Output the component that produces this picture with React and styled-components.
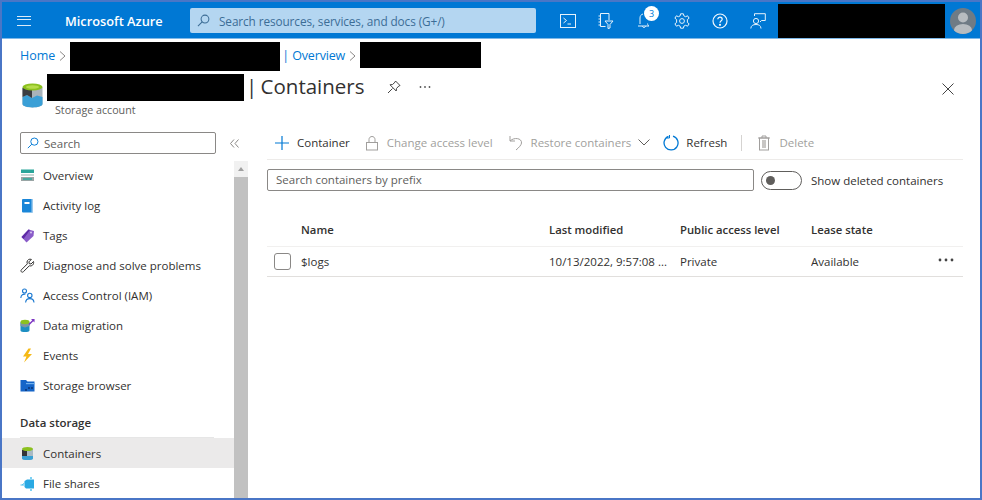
import React from 'react';
import styled, { createGlobalStyle } from 'styled-components';

const GlobalStyle = createGlobalStyle`
    html, body { margin: 0; padding: 0; background: #fff; }
    body { font-family: "Open Sans", "Noto Sans", "Liberation Sans", sans-serif; }
`;

const Frame = styled.div`
    width: 982px;
    height: 500px;
    box-sizing: border-box;
    border: 2px solid #4a76c6;
    overflow: hidden;
    display: flex;
    flex-direction: column;
    background: #fff;
`;

const TopBar = styled.header`
    height: 37px;
    flex: none;
    box-sizing: border-box;
    padding-top: 1px;
    background: #0078d4;
    display: flex;
    align-items: center;
    color: #fff;
    border-bottom: 1px solid #7fb8e8;
`;

const Burger = styled.div`
    width: 14px;
    height: 10px;
    margin-left: 15px;
    border-top: 1.5px solid #dcebf8;
    border-bottom: 1.5px solid #dcebf8;
    position: relative;
    box-sizing: border-box;
    &::after {
        content: '';
        position: absolute;
        left: 0;
        right: 0;
        top: 2.5px;
        border-top: 1.5px solid #dcebf8;
    }
`;

const Brand = styled.div`
    margin-left: 34px;
    width: 125px;
    font-size: 12.8px;
    font-weight: 600;
    white-space: nowrap;
`;

const GlobalSearch = styled.div`
    width: 346px;
    height: 25px;
    box-sizing: border-box;
    background: #b4d6f1;
    border-radius: 2px;
    display: flex;
    align-items: center;
    gap: 9px;
    padding-left: 7px;
    color: #3c6d96;
    font-size: 11.8px;
    letter-spacing: -0.1px;
`;

const TopIcons = styled.div`
    display: flex;
    align-items: center;
    margin-left: 22px;
    gap: 18px;
`;

const TopIconSlot = styled.div`
    width: 20px;
    height: 20px;
    position: relative;
    display: flex;
    align-items: center;
    justify-content: center;
`;

const Badge = styled.span`
    position: absolute;
    top: -5px;
    left: 10px;
    width: 15px;
    height: 15px;
    border-radius: 50%;
    background: #fff;
    color: #0078d4;
    font-size: 9px;
    line-height: 15px;
    text-align: center;
`;

const Redacted = styled.div`
    background: #000;
    flex: none;
    width: ${({ $w }) => $w}px;
    height: ${({ $h }) => $h}px;
`;

const AccountBlock = styled(Redacted)`
    margin-left: 10px;
`;

const Avatar = styled.div`
    margin-left: 5px;
    width: 26px;
    height: 26px;
    border-radius: 50%;
    overflow: hidden;
    flex: none;
`;

const Breadcrumb = styled.nav`
    height: 33px;
    flex: none;
    padding: 3px 0 0 18px;
    box-sizing: border-box;
    display: flex;
    align-items: flex-start;
    color: #0078d4;
    font-size: 12.5px;
`;

const Crumb = styled.span`
    line-height: 28px;
    white-space: nowrap;
    margin-left: ${({ $before }) => $before || 0}px;
    letter-spacing: ${({ $tight }) => ($tight ? '-0.15px' : '0')};
`;

const CrumbSep = styled.svg`
    width: 7px;
    height: 10px;
    margin: 9px 4px 0 4px;
    flex: none;
`;

const TitleRow = styled.div`
    height: 57px;
    flex: none;
    box-sizing: border-box;
    display: flex;
    align-items: flex-start;
    padding: 2px 26px 0 18px;
`;

const TitleIcon = styled.div`
    width: 25px;
    flex: none;
    padding: 9px 0 0 2px;
`;

const TitleText = styled.div`
    display: flex;
    flex-direction: column;
`;

const TitleLine = styled.div`
    display: flex;
    align-items: center;
    height: 27px;
`;

const Title = styled.h1`
    margin: 0 0 4px 2px;
    font-size: 20.5px;
    font-weight: 400;
    word-spacing: -2px;
    color: #323130;
    white-space: nowrap;
`;

const Subtitle = styled.div`
    font-size: 10.7px;
    color: #605e5c;
    margin: 2px 0 0 8px;
`;

const Pin = styled.svg`
    width: 14px;
    height: 14px;
    margin: 0 0 2px 22px;
`;

const More = styled.svg`
    width: 12px;
    height: 4px;
    margin: 0 0 2px 18px;
`;

const CloseBtn = styled.svg`
    width: 12px;
    height: 12px;
    margin: 9px 0 0 auto;
`;

const Main = styled.div`
    flex: 1;
    min-height: 0;
    display: flex;
`;

const Sidebar = styled.aside`
    width: 246px;
    flex: none;
    display: flex;
    flex-direction: column;
`;

const SideSearchRow = styled.div`
    display: flex;
    align-items: flex-start;
    height: 31px;
    flex: none;
    padding: 3px 0 0 18px;
    box-sizing: border-box;
`;

const SideSearch = styled.div`
    width: 196px;
    height: 22px;
    box-sizing: border-box;
    border: 1px solid #8a8886;
    border-radius: 2px;
    display: flex;
    align-items: center;
    gap: 5px;
    padding-left: 6px;
    font-size: 11.5px;
    color: #605e5c;
`;

const Collapse = styled.svg`
    width: 9px;
    height: 9px;
    margin: 7px 0 0 14px;
`;

const SideBody = styled.div`
    flex: 1;
    min-height: 0;
    display: flex;
    overflow: hidden;
`;

const Menu = styled.div`
    width: 232px;
    flex: none;
`;

const MenuItem = styled.div`
    height: 30px;
    display: flex;
    align-items: center;
    gap: 8px;
    padding-left: 18px;
    font-size: 11.5px;
    color: #323130;
    background: ${({ $active }) => ($active ? '#ebeaea' : 'transparent')};
    white-space: nowrap;
`;

const MenuIcon = styled.svg`
    width: 15px;
    height: 15px;
    flex: none;
`;

const MenuHeading = styled.div`
    height: 32px;
    margin: 6px 20px 0 18px;
    box-sizing: border-box;
    padding-top: 9px;
    font-size: 11.5px;
    font-weight: 600;
    color: #323130;
    border-bottom: 1px solid #e6e6e6;
`;

const ScrollTrack = styled.div`
    width: 14px;
    flex: none;
    margin-top: 1px;
    display: flex;
    flex-direction: column;
    background: #f1f1f1;
`;

const ScrollArrow = styled.div`
    height: 16px;
    flex: none;
    display: flex;
    align-items: center;
    justify-content: center;
    &::before {
        content: '';
        border-left: 3.5px solid transparent;
        border-right: 3.5px solid transparent;
        border-bottom: 4px solid #a0a0a0;
    }
`;

const ScrollThumb = styled.div`
    flex: 1;
    background: #c1c1c1;
`;

const Content = styled.main`
    flex: 1;
    min-width: 0;
    padding: 0 17px 0 19px;
`;

const Toolbar = styled.div`
    height: 31px;
    display: flex;
    align-items: center;
    border-bottom: 1px solid #edebe9;
    box-sizing: border-box;
    padding: 0 0 3px 7px;
    font-size: 11.5px;
`;

const ToolButton = styled.div`
    display: flex;
    align-items: center;
    gap: 7px;
    margin-right: ${({ $gap }) => $gap}px;
    color: ${({ $off }) => ($off ? '#a19f9d' : '#323130')};
    white-space: nowrap;
`;

const ToolDivider = styled.div`
    width: 1px;
    height: 16px;
    background: #d5d3d1;
    margin-right: 14px;
`;

const ToolIcon = styled.svg`
    width: 16px;
    height: 16px;
    flex: none;
`;

const FilterRow = styled.div`
    display: flex;
    align-items: center;
    margin-top: 9px;
    height: 22px;
`;

const PrefixInput = styled.div`
    width: 487px;
    height: 22px;
    box-sizing: border-box;
    border: 1px solid #8a8886;
    border-radius: 2px;
    padding-left: 8px;
    font-size: 11.5px;
    line-height: 20px;
    color: #605e5c;
`;

const Toggle = styled.div`
    width: 41px;
    height: 19px;
    box-sizing: border-box;
    margin-left: 7px;
    border: 1px solid #605e5c;
    border-radius: 10px;
    display: flex;
    align-items: center;
    padding-left: 4px;
    &::before {
        content: '';
        width: 9px;
        height: 9px;
        border-radius: 50%;
        background: #605e5c;
    }
`;

const ToggleLabel = styled.span`
    margin-left: 9px;
    font-size: 11.5px;
    color: #323130;
    white-space: nowrap;
`;

const TableGrid = styled.div`
    margin-top: 22px;
`;

const Row = styled.div`
    display: grid;
    grid-template-columns: 34px 248px 131px 131px 1fr 24px;
    align-items: center;
    height: ${({ $h }) => $h}px;
    border-bottom: 1px solid ${({ $head }) => ($head ? '#f1f0ef' : '#e1dfdd')};
    box-sizing: border-box;
    font-size: ${({ $head }) => ($head ? 11.3 : 11.5)}px;
    font-weight: ${({ $head }) => ($head ? 600 : 400)};
    color: #323130;
    white-space: nowrap;
`;

const Cell = styled.div`
    overflow: hidden;
`;

const Checkbox = styled.div`
    width: 17px;
    height: 17px;
    margin-left: 7px;
    box-sizing: border-box;
    border: 1px solid #8a8886;
    border-radius: 3px;
`;

const RowMenu = styled.svg`
    width: 16px;
    height: 4px;
    margin: 0 0 4px -1px;
`;

const icons = {
    overview: (
        <MenuIcon viewBox="0 0 15 15">
            <rect x="1" y="1.5" width="13" height="3.5" fill="#2aa59a" />
            <rect x="1" y="6" width="13" height="2" fill="#c8d8d6" />
            <rect x="1" y="9" width="13" height="4" fill="#9aa5a5" />
            <rect x="3" y="10" width="9" height="2" fill="#48a89f" />
        </MenuIcon>
    ),
    activity: (
        <MenuIcon viewBox="0 0 15 15">
            <rect x="2" y="1" width="11" height="13.5" rx="1" fill="#1a86d8" />
            <rect x="11.5" y="1" width="1.5" height="13.5" fill="#9cc9ec" />
            <rect x="4.5" y="4" width="5" height="2" fill="#fff" />
        </MenuIcon>
    ),
    tags: (
        <MenuIcon viewBox="0 0 15 15">
            <path d="M1.5 9 L8.5 1.5 L14 3 L13.5 8 L6.5 14.5 Z" fill="#8a5cc9" />
            <path d="M1.5 9 L8.5 1.5 L10 2 L3.5 11 Z" fill="#5e2aa5" />
            <circle cx="11" cy="4.5" r="1" fill="#d9c8ef" />
        </MenuIcon>
    ),
    wrench: (
        <MenuIcon viewBox="0 0 15 15">
            <path
                d="M13.5 3.5 L11 6 L9.2 5.6 L8.9 3.9 L11.4 1.4 C9.4 0.6 7.2 1.8 7 4 C7 4.7 7.1 5.3 7.4 5.8 L1.4 11.8 C0.7 12.5 0.9 13.3 1.4 13.8 C1.9 14.3 2.8 14.4 3.4 13.7 L9.3 7.8 C11.6 8.6 14.3 6.6 13.5 3.5 Z"
                fill="none"
                stroke="#323130"
                strokeWidth="1"
            />
        </MenuIcon>
    ),
    iam: (
        <MenuIcon viewBox="0 0 15 15">
            <g fill="none" stroke="#1a78d0" strokeWidth="1.1">
                <circle cx="4.5" cy="3" r="2" />
                <path d="M0.8 10 C1 6.8 3.2 6 5.4 6.2" />
                <circle cx="9.8" cy="7.4" r="2.2" />
                <path d="M5.6 14.5 C5.8 11.4 7.6 10.6 9.8 10.6 C12 10.6 13.8 11.4 14 14.5" />
            </g>
        </MenuIcon>
    ),
    migration: (
        <MenuIcon viewBox="0 0 15 15">
            <path d="M0.5 4 V12.5 C0.5 14.6 9.5 14.6 9.5 12.5 V4 Z" fill="#1d8fc2" />
            <path d="M0.5 5 H9.5 V8 L5 9.5 L0.5 8 Z" fill="#7d95a3" />
            <ellipse cx="5" cy="4" rx="4.5" ry="2.2" fill="#8cc11f" />
            <path d="M9 6.5 L14 1.5" stroke="#7c35c2" strokeWidth="1.4" />
            <path d="M11 1 H14.5 V4.5 Z" fill="#7c35c2" />
        </MenuIcon>
    ),
    events: (
        <MenuIcon viewBox="0 0 15 15">
            <path d="M8.5 0.5 L3 8.5 H6.5 L4 14.5 L12 6 H8 L11 0.5 Z" fill="#f5b915" />
        </MenuIcon>
    ),
    browser: (
        <MenuIcon viewBox="0 0 15 15">
            <path d="M0.5 2 H6 L7.5 3.5 H14.5 V13.5 H0.5 Z" fill="#1565c8" />
            <rect x="6" y="5" width="8.5" height="1.2" fill="#6fb1ee" />
            <g fill="#0e3f86">
                <rect x="8" y="9" width="2" height="2" />
                <rect x="11" y="9" width="2" height="2" />
                <rect x="5" y="11" width="2" height="2" />
            </g>
        </MenuIcon>
    ),
    containers: (
        <MenuIcon viewBox="0 0 15 15">
            <path d="M2 3 V12.5 C2 14.5 13 14.5 13 12.5 V3 Z" fill="#a9bac4" />
            <path d="M2 10 H13 V12.5 C13 14.5 2 14.5 2 12.5 Z" fill="#3aa0d4" />
            <path d="M2 4 H7 V10 H2 Z" fill="#333438" />
            <ellipse cx="7.5" cy="3" rx="5.5" ry="2" fill="#8cc11f" />
        </MenuIcon>
    ),
    shares: (
        <MenuIcon viewBox="0 0 15 15">
            <path d="M4.5 5 L7 3.5 H14 V12.5 H6 L4.5 11 Z" fill="#29a9e3" />
            <path d="M0.5 9 H4 M2 9 L4.5 7" stroke="#50c2ef" strokeWidth="1" />
            <circle cx="11" cy="2" r="1" fill="#50c2ef" />
            <circle cx="11" cy="14" r="1" fill="#50c2ef" />
        </MenuIcon>
    ),
};

const menuTop = [
    ['overview', 'Overview'],
    ['activity', 'Activity log'],
    ['tags', 'Tags'],
    ['wrench', 'Diagnose and solve problems'],
    ['iam', 'Access Control (IAM)'],
    ['migration', 'Data migration'],
    ['events', 'Events'],
    ['browser', 'Storage browser'],
];

const SearchGlyph = ({ color, size }) => (
    <svg width={size} height={size} viewBox="0 0 14 14" fill="none" stroke={color} strokeWidth="1.1">
        <circle cx="8.6" cy="5.4" r="4.2" />
        <path d="M5.6 8.4 L1 13" />
    </svg>
);

const App = () => (
    <Frame>
        <GlobalStyle />
        <TopBar>
            <Burger />
            <Brand>Microsoft Azure</Brand>
            <GlobalSearch>
                <SearchGlyph color="#3c6d96" size={13} />
                Search resources, services, and docs (G+/)
            </GlobalSearch>
            <TopIcons>
                <TopIconSlot>
                    <svg width="16" height="14" viewBox="0 0 16 14" fill="none" stroke="#e6f2fb" strokeWidth="1">
                        <rect x="0.5" y="0.5" width="15" height="13" />
                        <path d="M3.5 4 L6.5 6.5 L3.5 9" />
                        <path d="M7.5 10 H11" />
                    </svg>
                </TopIconSlot>
                <TopIconSlot>
                    <svg width="16" height="16" viewBox="0 0 16 16" fill="none" stroke="#e6f2fb" strokeWidth="1">
                        <path d="M2.5 0.5 H11 V7 M2.5 0.5 V13.5 H7.5" />
                        <path d="M0.5 3 H2.5 M0.5 6 H2.5 M0.5 9 H2.5 M0.5 12 H2.5" />
                        <path d="M7 8 H15 L12 11.5 V15 L10 15.5 V11.5 Z" />
                    </svg>
                </TopIconSlot>
                <TopIconSlot>
                    <svg width="14" height="16" viewBox="0 0 14 16" fill="none" stroke="#e6f2fb" strokeWidth="1">
                        <path d="M3 11 V5 C3 3 4 1.5 6 1 M1 13 H12 C11 12.5 10.6 11.8 10.6 10.5" />
                        <path d="M5.5 13 C5.5 15 8.5 15 8.5 13" />
                    </svg>
                    <Badge>3</Badge>
                </TopIconSlot>
                <TopIconSlot>
                    <svg width="16" height="16" viewBox="0 0 16 16" fill="none" stroke="#e6f2fb" strokeWidth="1">
                        <circle cx="8" cy="8" r="2.4" />
                        <path d="M6.6 0.8 H9.4 L9.9 2.9 L11.6 3.7 L13.6 2.8 L15.1 5.2 L13.4 6.5 V9.5 L15.1 10.8 L13.6 13.2 L11.6 12.3 L9.9 13.1 L9.4 15.2 H6.6 L6.1 13.1 L4.4 12.3 L2.4 13.2 L0.9 10.8 L2.6 9.5 V6.5 L0.9 5.2 L2.4 2.8 L4.4 3.7 L6.1 2.9 Z" />
                    </svg>
                </TopIconSlot>
                <TopIconSlot>
                    <svg width="16" height="16" viewBox="0 0 16 16" fill="none" stroke="#f2f8fd" strokeWidth="1.2">
                        <circle cx="8" cy="8" r="7" />
                        <path d="M5.8 6.2 C5.8 3.4 10.2 3.4 10.2 6.2 C10.2 7.8 8 7.8 8 9.8" />
                        <circle cx="8" cy="11.8" r="0.5" fill="#f2f8fd" />
                    </svg>
                </TopIconSlot>
                <TopIconSlot>
                    <svg width="16" height="16" viewBox="0 0 16 16" fill="none" stroke="#e6f2fb" strokeWidth="1">
                        <circle cx="6" cy="8" r="2.6" />
                        <path d="M0.8 15.5 C1 12.6 3 11.5 6 11.5 C9 11.5 10.8 12.6 11 15.5" />
                        <path d="M4.5 3 V0.7 H15.3 V7.5 H11.5 L10 9" />
                    </svg>
                </TopIconSlot>
            </TopIcons>
            <AccountBlock $w={167} $h={34} />
            <Avatar>
                <svg width="26" height="26" viewBox="0 0 26 26">
                    <rect width="26" height="26" fill="#6f7b85" />
                    <circle cx="13" cy="9.5" r="5" fill="#b7bcc0" />
                    <ellipse cx="13" cy="22" rx="9" ry="6" fill="#b7bcc0" />
                </svg>
            </Avatar>
        </TopBar>
        <Breadcrumb>
            <Crumb>Home</Crumb>
            <CrumbSep viewBox="0 0 7 10" fill="none" stroke="#8a8886">
                <path d="M1 0.5 L6 5 L1 9.5" />
            </CrumbSep>
            <Redacted $w={210} $h={29} />
            <Crumb $before={2} $tight>| Overview</Crumb>
            <CrumbSep viewBox="0 0 7 10" fill="none" stroke="#8a8886">
                <path d="M1 0.5 L6 5 L1 9.5" />
            </CrumbSep>
            <Redacted $w={121} $h={26} />
        </Breadcrumb>
        <TitleRow>
            <TitleIcon>
                <svg width="21" height="25" viewBox="0 0 21 25">
                    <path d="M0.5 4 V21 C0.5 25.5 20.5 25.5 20.5 21 V4 Z" fill="#a9b3ba" />
                    <path d="M0.5 14 L5 12 L10 15 L15 12.5 L20.5 14 V21 C20.5 25.5 0.5 25.5 0.5 21 Z" fill="#3a9fd6" />
                    <path d="M0.5 5 H10 V15 L5 12 L0.5 14 Z" fill="#3b3d42" />
                    <ellipse cx="10.5" cy="4" rx="10" ry="3.5" fill="#8cc11f" />
                    <ellipse cx="10.5" cy="4" rx="6.5" ry="1.8" fill="#b6dc4a" />
                </svg>
            </TitleIcon>
            <TitleText>
                <TitleLine>
                    <Redacted $w={197} $h={27} />
                    <Title>| Containers</Title>
                    <Pin viewBox="0 0 14 14" fill="none" stroke="#444" strokeWidth="1">
                        <path d="M8.5 1 L13 5.5 L11.8 6 L9.5 8.5 L9.2 11 L3 4.8 L5.5 4.5 L8 2.2 Z" />
                        <path d="M5.5 8.5 L1 13" />
                    </Pin>
                    <More viewBox="0 0 12 4" fill="#555">
                        <circle cx="1.5" cy="2" r="0.9" />
                        <circle cx="6" cy="2" r="0.9" />
                        <circle cx="10.5" cy="2" r="0.9" />
                    </More>
                </TitleLine>
                <Subtitle>Storage account</Subtitle>
            </TitleText>
            <CloseBtn viewBox="0 0 12 12" stroke="#444" strokeWidth="1">
                <path d="M0.5 0.5 L11.5 11.5 M11.5 0.5 L0.5 11.5" />
            </CloseBtn>
        </TitleRow>
        <Main>
            <Sidebar>
                <SideSearchRow>
                    <SideSearch>
                        <SearchGlyph color="#0078d4" size={12} />
                        Search
                    </SideSearch>
                    <Collapse viewBox="0 0 9 9" fill="none" stroke="#8a8886">
                        <path d="M4 0.5 L0.5 4.5 L4 8.5 M8.5 0.5 L5 4.5 L8.5 8.5" />
                    </Collapse>
                </SideSearchRow>
                <SideBody>
                    <Menu>
                        {menuTop.map(([key, label]) => (
                            <MenuItem key={key}>
                                {icons[key]}
                                {label}
                            </MenuItem>
                        ))}
                        <MenuHeading>Data storage</MenuHeading>
                        <MenuItem $active>
                            {icons.containers}
                            Containers
                        </MenuItem>
                        <MenuItem>
                            {icons.shares}
                            File shares
                        </MenuItem>
                    </Menu>
                    <ScrollTrack>
                        <ScrollArrow />
                        <ScrollThumb />
                    </ScrollTrack>
                </SideBody>
            </Sidebar>
            <Content>
                <Toolbar>
                    <ToolButton $gap={14}>
                        <ToolIcon viewBox="0 0 16 16" stroke="#0078d4" strokeWidth="1.2">
                            <path d="M8 1 V15 M1 8 H15" />
                        </ToolIcon>
                        Container
                    </ToolButton>
                    <ToolButton $off $gap={15}>
                        <ToolIcon viewBox="0 0 16 16" fill="none" stroke="#a19f9d">
                            <rect x="2.5" y="7.5" width="11" height="7.5" />
                            <path d="M5 7.5 V4.5 C5 0.5 11 0.5 11 4.5 V7.5" />
                        </ToolIcon>
                        Change access level
                    </ToolButton>
                    <ToolButton $off $gap={13}>
                        <ToolIcon viewBox="0 0 16 16" fill="none" stroke="#a19f9d">
                            <path d="M2 1 L2 6 L7 6" />
                            <path d="M2 6 C6 2 14 3 13.5 8 C13.3 10 11 12.5 8 15" />
                        </ToolIcon>
                        Restore containers
                        <svg width="12" height="7" viewBox="0 0 12 7" fill="none" stroke="#605e5c">
                            <path d="M0.5 0.5 L6 6 L11.5 0.5" />
                        </svg>
                    </ToolButton>
                    <ToolButton $gap={14}>
                        <ToolIcon viewBox="0 0 16 16" fill="none" stroke="#0078d4" strokeWidth="1.3">
                            <path d="M5.5 1.4 A7 7 0 1 0 10 1.2" />
                            <path d="M6.5 0 V3 H3.5" strokeWidth="1" />
                        </ToolIcon>
                        Refresh
                    </ToolButton>
                    <ToolDivider />
                    <ToolButton $off $gap={0}>
                        <ToolIcon viewBox="0 0 16 16" fill="none" stroke="#a19f9d">
                            <path d="M2 3 H14 M6 3 V1 H10 V3" />
                            <rect x="3.5" y="3" width="9" height="12" />
                            <rect x="6" y="5" width="4" height="8" fill="#c8c6c4" stroke="none" />
                        </ToolIcon>
                        Delete
                    </ToolButton>
                </Toolbar>
                <FilterRow>
                    <PrefixInput>Search containers by prefix</PrefixInput>
                    <Toggle />
                    <ToggleLabel>Show deleted containers</ToggleLabel>
                </FilterRow>
                <TableGrid>
                    <Row $head $h={34}>
                        <span />
                        <Cell>Name</Cell>
                        <Cell>Last modified</Cell>
                        <Cell>Public access level</Cell>
                        <Cell>Lease state</Cell>
                        <span />
                    </Row>
                    <Row $h={30}>
                        <Checkbox />
                        <Cell>$logs</Cell>
                        <Cell>10/13/2022, 9:57:08 ...</Cell>
                        <Cell>Private</Cell>
                        <Cell>Available</Cell>
                        <RowMenu viewBox="0 0 16 4" fill="#444">
                            <circle cx="2" cy="2" r="1.4" />
                            <circle cx="8" cy="2" r="1.4" />
                            <circle cx="14" cy="2" r="1.4" />
                        </RowMenu>
                    </Row>
                </TableGrid>
            </Content>
        </Main>
    </Frame>
);

export default App;
